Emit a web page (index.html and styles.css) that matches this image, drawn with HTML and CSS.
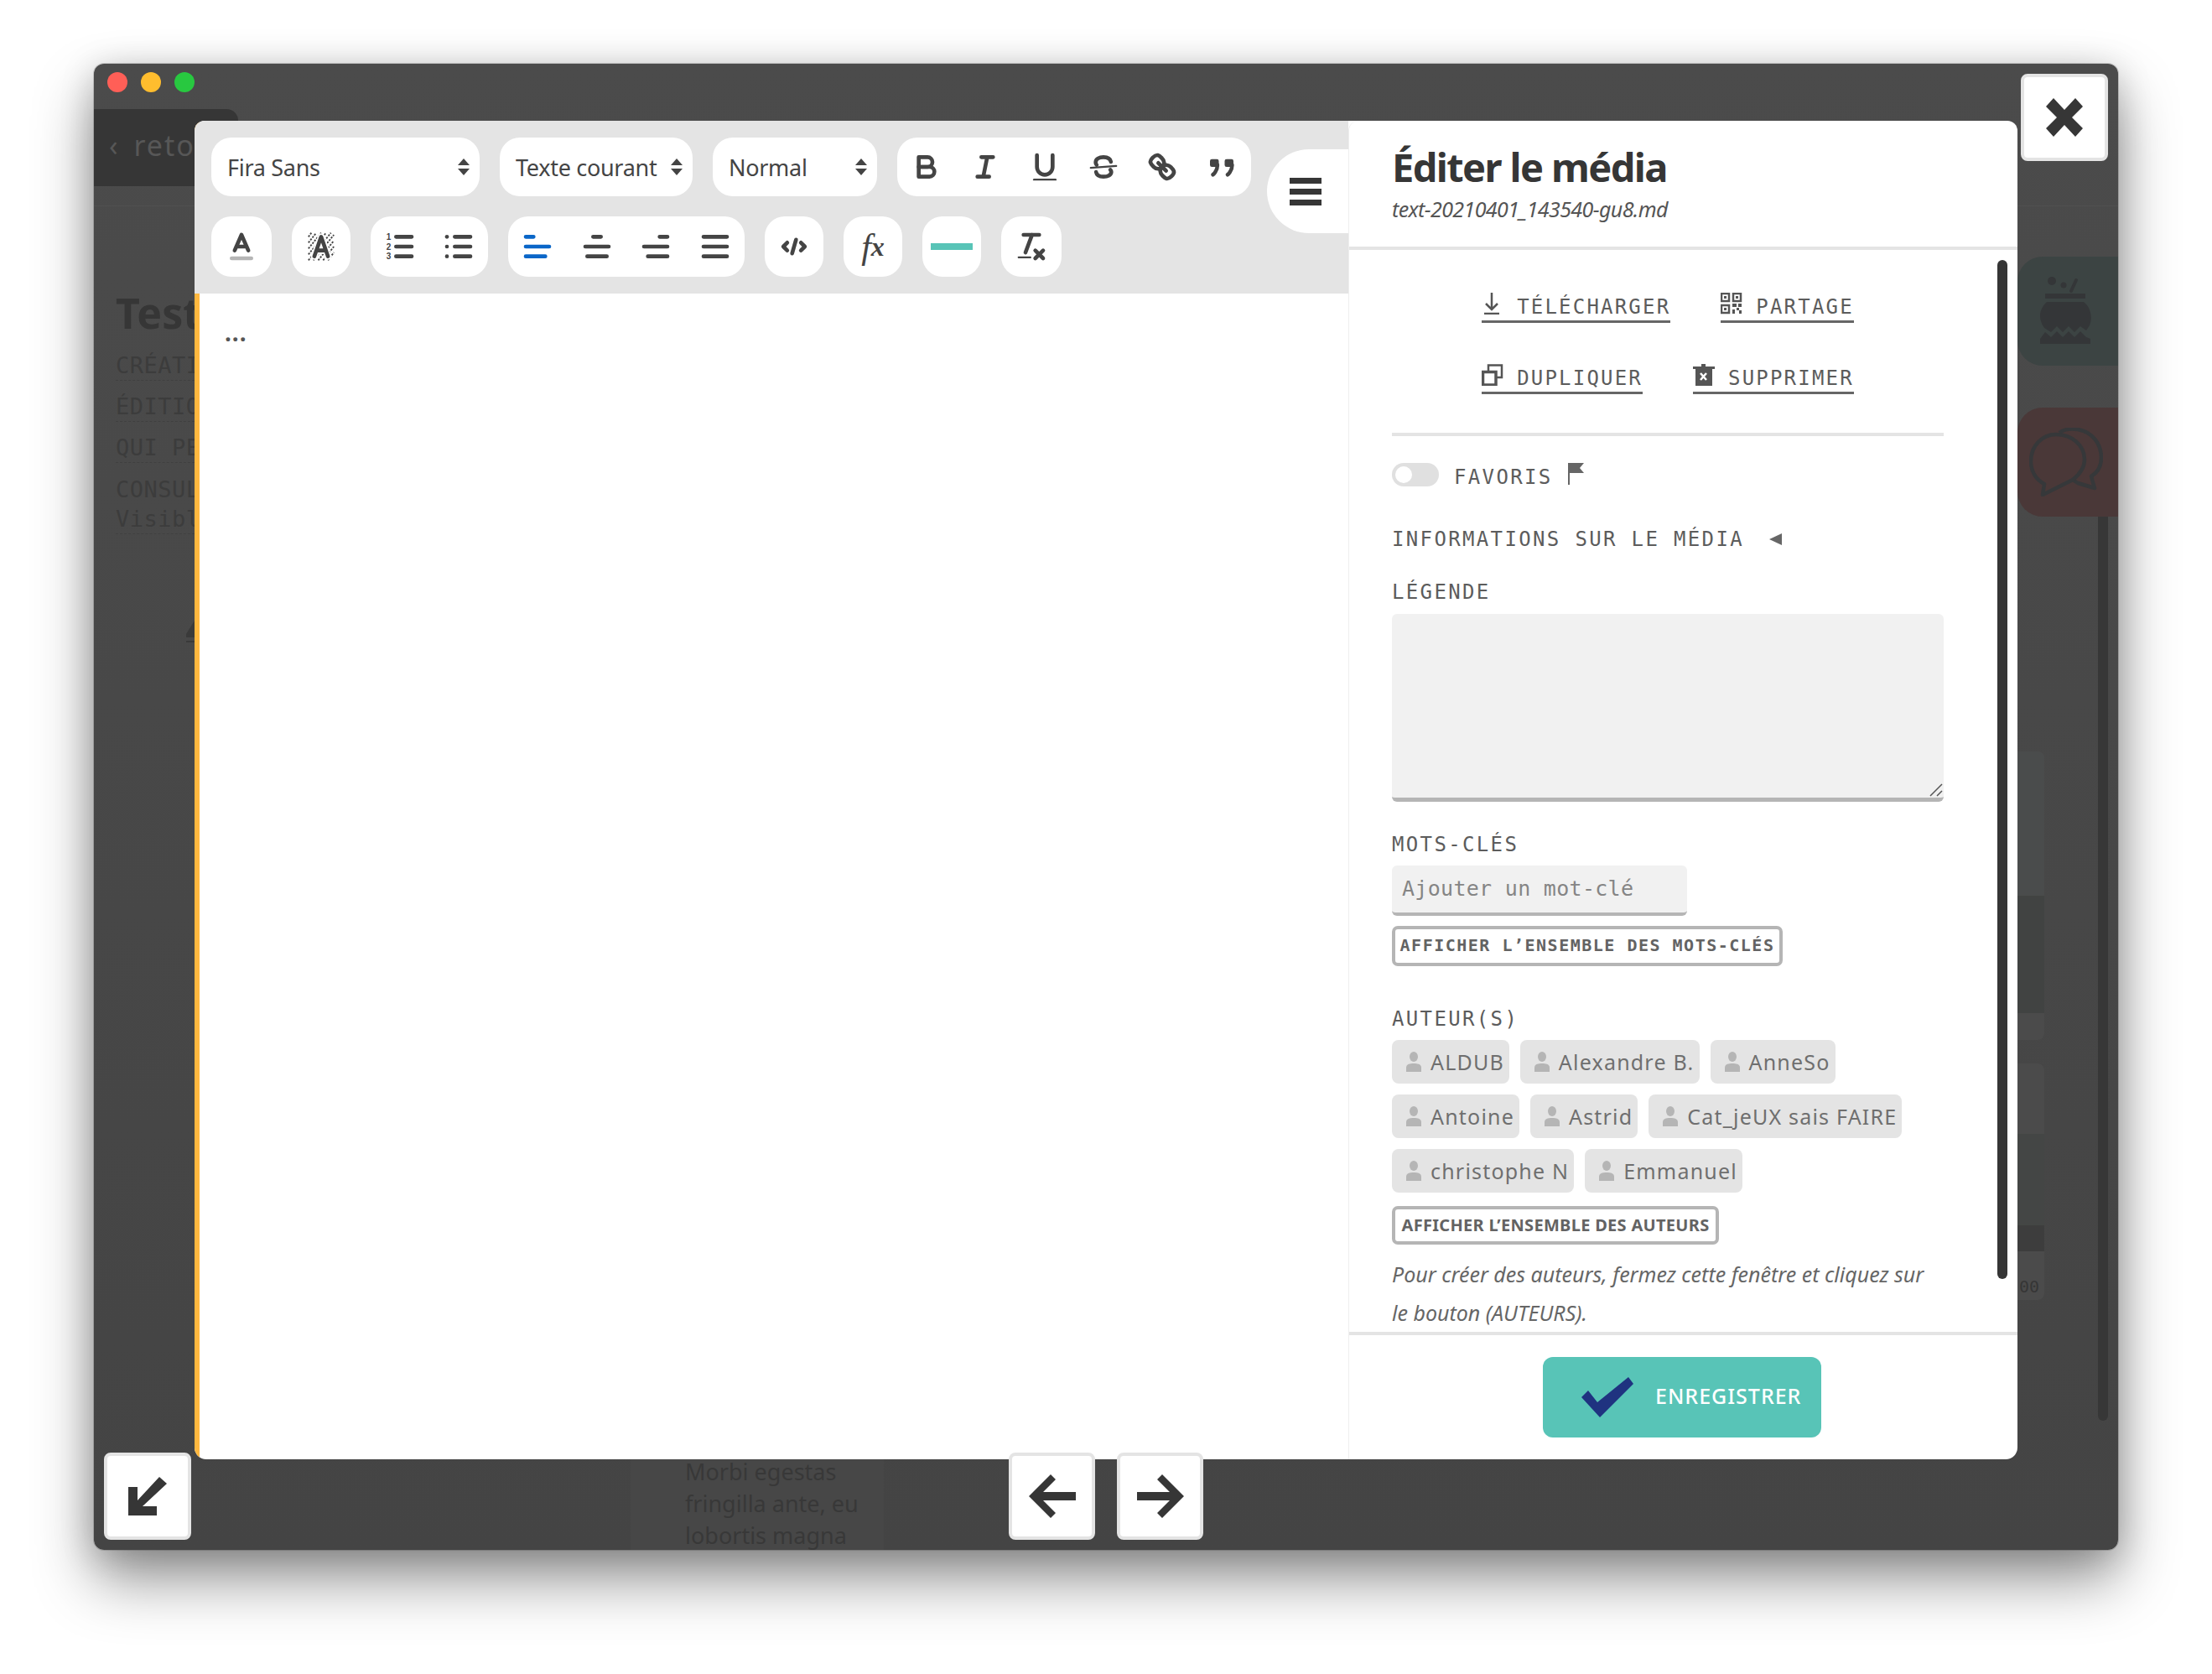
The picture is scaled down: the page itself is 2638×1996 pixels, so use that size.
FILE: index.html
```html
<!DOCTYPE html>
<html lang="fr">
<head>
  <meta charset="UTF-8">
  <title>Éditer le média</title>
  <link rel="stylesheet" href="styles.css">
</head>
<body>
<div class="window">
  <div class="titlebar">
    <span class="dot dot-red"></span>
    <span class="dot dot-yellow"></span>
    <span class="dot dot-green"></span>
  </div>

  <!-- page dimmed behind the modal -->
  <div class="back-tab">‹ retour</div>
  <div class="back-strip"></div>
  <div class="back-col">
    <h1 class="back-title">Test</h1>
    <p class="back-meta">CRÉATION</p>
    <p class="back-meta">ÉDITION</p>
    <p class="back-meta">QUI PEUT</p>
    <p class="back-meta back-meta-last">CONSULTER<br>Visible</p>
  </div>
  <svg class="back-pen" viewBox="0 0 10 26"><path d="M10 0 0 16v4h10z"/><rect y="24" width="10" height="2"/></svg>

  <div class="tile tile-green">
    <svg viewBox="0 0 62 80">
      <circle cx="15" cy="5" r="5"/><circle cx="29" cy="10" r="3.500"/>
      <path d="M44 4 38 17" fill="none" stroke="#343638" stroke-width="4" stroke-linecap="round"/>
      <rect x="7" y="20" width="48" height="6"/>
      <path d="M9 30H53C61 36 64 48 60 58L56 64 49 59 42 66 35 59 28 66 21 59 14 66 6 61C-2 50 0 38 9 30Z"/>
      <path d="M1 80V74L7 66 14 72 21 65 28 72 35 65 42 72 49 65 56 72 61 74V80Z"/>
    </svg>
  </div>
  <div class="tile tile-red">
    <svg viewBox="0 0 88 82" fill="none" stroke="#36383a" stroke-width="4.500" stroke-linejoin="round">
      <path d="M36 6C42 1 50 1 58 2 76 5 86 20 86 36 86 45 82 53 74 58L78 72 58 66 52 62"/>
      <path d="M32 8C15 8 2 22 2 40 2 52 8 62 18 67L16 80 52 62C62 54 66 46 66 38 66 21 51 8 32 8Z"/>
    </svg>
  </div>
  <div class="card card-one"><div class="card-img"></div></div>
  <div class="card card-two"><div class="card-head"></div><div class="card-img"></div><div class="card-foot">00</div></div>
  <div class="bottom-card">Morbi egestas<br>fringilla ante, eu<br>lobortis magna</div>
  <div class="page-scroll"></div>

  <!-- modal -->
  <div class="modal">
    <div class="editor">
      <div class="toolbar">
        <div class="tool-row">
          <div class="select select-font">Fira Sans<span class="updown"></span></div>
          <div class="select select-style">Texte courant<span class="updown"></span></div>
          <div class="select select-size">Normal<span class="updown"></span></div>
          <div class="group group-format">
            <span class="tool"><svg viewBox="0 0 18 18"><path d="M5 4H9.500A2.500 2.500 0 0 1 9.500 9H5Z"/><path d="M5 9H10.500A2.500 2.500 0 0 1 10.500 14H5Z"/></svg></span>
            <span class="tool"><svg viewBox="0 0 18 18"><path d="M7 4H13M5 14H11M8 14 10 4"/></svg></span>
            <span class="tool"><svg viewBox="0 0 18 18"><path d="M5 3V9A4 4 0 0 0 13 9V3"/><rect class="fill" x="3" y="15" width="12" height="1" rx="0.500"/></svg></span>
            <span class="tool"><svg viewBox="0 0 18 18"><path class="thin" d="M15.500 8.500 2.500 9.500"/><path d="M12.800 6.400C12.500 4.800 10.900 4 9 4 6.800 4 5 5 5 6.700 5 7.300 5.200 7.700 5.500 8M12.500 10.500C12.800 10.800 13 11.200 13 11.600 13 13.100 11.200 14 9 14 7 14 5.500 13.200 5.200 11.600"/></svg></span>
            <span class="tool"><svg viewBox="0 0 18 18"><path d="M7 7 11 11"/><path d="M8.900 4.600A3.500 3.500 0 0 1 9.260 9.260 3.500 3.500 0 0 1 4.600 8.900C3.200 7.500 2 6.400 4.200 4.200S7.500 3.200 8.900 4.600Z"/><path d="M13.400 9.100A3.500 3.500 0 0 0 8.740 8.740 3.500 3.500 0 0 0 9.100 13.400C10.500 14.800 11.600 16 13.800 13.800S14.800 10.500 13.400 9.100Z"/></svg></span>
            <span class="tool"><svg viewBox="0 0 18 18"><rect class="fill" x="3" y="5" width="4.500" height="4" rx="1"/><rect class="fill" x="10.500" y="5" width="4.500" height="4" rx="1"/><path d="M6.800 8C6.800 11 4.500 13 4.500 13M14.300 8C14.300 11 12 13 12 13"/></svg></span>
          </div>
        </div>
        <div class="tool-row">
          <div class="group">
            <span class="tool tool-one"><svg viewBox="0 0 18 18"><path d="M5.500 11 9 3 12.500 11M11.600 9H6.400"/><rect class="grey" x="3" y="14" width="12" height="2" rx="1"/></svg></span>
          </div>
          <div class="group">
            <span class="tool tool-bg"><svg viewBox="0 0 18 18"><path class="hatch" d="M2.500 4 4 2M2.500 7 6.500 2M2.500 10 9 2M2.500 13 11.500 2M2.500 16 14 2M5 16 15.500 3M7.500 16 15.500 6M10 16 15.500 9M12.500 16 15.500 12"/><path class="halo" d="M5.500 14 9 4 12.500 14M11.400 11H6.600"/><path d="M5.500 14 9 4 12.500 14M11.400 11H6.600"/></svg></span>
          </div>
          <div class="group">
            <span class="tool"><svg viewBox="0 0 18 18"><path d="M7 4H15M7 9H15M7 14H15"/><text class="num" x="2" y="5.600">1</text><text class="num" x="2" y="10.600">2</text><text class="num" x="2" y="15.600">3</text></svg></span>
            <span class="tool"><svg viewBox="0 0 18 18"><path d="M7 4H15M7 9H15M7 14H15"/><circle class="fill" cx="3" cy="4" r="1"/><circle class="fill" cx="3" cy="9" r="1"/><circle class="fill" cx="3" cy="14" r="1"/></svg></span>
          </div>
          <div class="group group-align">
            <span class="tool tool-active"><svg viewBox="0 0 18 18"><path d="M3 4H7M3 9H15M3 14H13"/></svg></span>
            <span class="tool"><svg viewBox="0 0 18 18"><path d="M7 4H11M3 9H15M4 14H14"/></svg></span>
            <span class="tool"><svg viewBox="0 0 18 18"><path d="M11 4H15M3 9H15M5 14H15"/></svg></span>
            <span class="tool"><svg viewBox="0 0 18 18"><path d="M3 4H15M3 9H15M3 14H15"/></svg></span>
          </div>
          <div class="group">
            <span class="tool"><svg viewBox="0 0 18 18"><path d="M5.500 7 3.500 9 5.500 11M12.500 7 14.500 9 12.500 11M10 5.500 8 12.500"/></svg></span>
          </div>
          <div class="group">
            <span class="tool tool-fx"><i>f</i><sub>x</sub></span>
          </div>
          <div class="group">
            <span class="tool"><span class="hr-mark"></span></span>
          </div>
          <div class="group">
            <span class="tool tool-one"><svg viewBox="0 0 18 18"><path d="M5 3H13M6 12 9.350 3M11 11 15 15M15 11 11 15"/><rect class="fill" x="2" y="14" width="7" height="1" rx="0.500"/></svg></span>
          </div>
        </div>
      </div>
      <div class="editor-text">...</div>
      <div class="menu-tab"><span></span><span></span><span></span></div>
    </div>

    <div class="panel">
      <header class="panel-head">
        <h2>Éditer le média</h2>
        <p>text-20210401_143540-gu8.md</p>
      </header>

      <div class="panel-body">
        <div class="actions">
          <div class="action-row">
            <a class="action"><svg viewBox="0 0 26 26"><path d="M12 0V19M5 13 12 20 19 13M3 25H21"/></svg>TÉLÉCHARGER</a>
            <a class="action"><svg class="qr" viewBox="0 0 26 26"><path d="M1 1H10V10H1ZM15 1H24V10H15ZM1 15H10V24H1Z"/><rect class="solid" x="4" y="4" width="3" height="3"/><rect class="solid" x="18" y="4" width="3" height="3"/><rect class="solid" x="4" y="18" width="3" height="3"/><rect class="solid" x="14" y="13" width="5" height="4"/><rect class="solid" x="21" y="13" width="4" height="4"/><rect class="solid" x="14" y="20" width="3" height="5"/><rect class="solid" x="19" y="18" width="3" height="3"/><rect class="solid" x="22" y="21" width="3" height="4"/></svg>PARTAGE</a>
          </div>
          <div class="action-row">
            <a class="action"><svg viewBox="0 0 26 26"><path d="M8 9V1.500H24V16H17"/><path d="M1.500 9.500H17V25H1.500Z" stroke-width="3.500"/></svg>DUPLIQUER</a>
            <a class="action"><svg viewBox="0 0 26 26"><path class="solid" d="M10 0H15V3H26V6H23V26H3V6H0V3H10Z"/><path class="cross" d="M9 11 16 19M16 11 9 19"/></svg>SUPPRIMER</a>
          </div>
        </div>

        <div class="fav-row">
          <span class="switch"></span>
          <span class="mono-label">FAVORIS</span>
          <svg class="flag" viewBox="0 0 19 26"><rect width="2" height="26"/><path d="M2 0H19L14 6 19 12H2Z"/></svg>
        </div>

        <div class="info-row">
          <span class="mono-label">INFORMATIONS SUR LE MÉDIA</span>
          <span class="arrow-left"></span>
        </div>

        <label class="mono-label field-label" for="legende">LÉGENDE</label>
        <div class="caption-wrap">
          <textarea id="legende" class="caption"></textarea>
          <svg class="grip" viewBox="0 0 16 16"><path d="M15 1 1 15M15 9 9 15"/></svg>
        </div>

        <label class="mono-label keywords-label" for="motcle">MOTS-CLÉS</label>
        <input id="motcle" class="keyword" type="text" placeholder="Ajouter un mot-clé">
        <button class="outline outline-mono">AFFICHER L’ENSEMBLE DES MOTS-CLÉS</button>

        <div class="mono-label authors-label">AUTEUR(S)</div>
        <div class="tags">
          <span class="tag"><svg viewBox="0 0 18 24"><ellipse cx="9" cy="6" rx="5" ry="6"/><path d="M0 24V19C0 15 4 14 9 14S18 15 18 19V24Z"/></svg>ALDUB</span>
          <span class="tag"><svg viewBox="0 0 18 24"><ellipse cx="9" cy="6" rx="5" ry="6"/><path d="M0 24V19C0 15 4 14 9 14S18 15 18 19V24Z"/></svg>Alexandre B.</span>
          <span class="tag"><svg viewBox="0 0 18 24"><ellipse cx="9" cy="6" rx="5" ry="6"/><path d="M0 24V19C0 15 4 14 9 14S18 15 18 19V24Z"/></svg>AnneSo</span>
          <span class="tag"><svg viewBox="0 0 18 24"><ellipse cx="9" cy="6" rx="5" ry="6"/><path d="M0 24V19C0 15 4 14 9 14S18 15 18 19V24Z"/></svg>Antoine</span>
          <span class="tag"><svg viewBox="0 0 18 24"><ellipse cx="9" cy="6" rx="5" ry="6"/><path d="M0 24V19C0 15 4 14 9 14S18 15 18 19V24Z"/></svg>Astrid</span>
          <span class="tag"><svg viewBox="0 0 18 24"><ellipse cx="9" cy="6" rx="5" ry="6"/><path d="M0 24V19C0 15 4 14 9 14S18 15 18 19V24Z"/></svg>Cat_jeUX sais FAIRE</span>
          <span class="tag"><svg viewBox="0 0 18 24"><ellipse cx="9" cy="6" rx="5" ry="6"/><path d="M0 24V19C0 15 4 14 9 14S18 15 18 19V24Z"/></svg>christophe N</span>
          <span class="tag"><svg viewBox="0 0 18 24"><ellipse cx="9" cy="6" rx="5" ry="6"/><path d="M0 24V19C0 15 4 14 9 14S18 15 18 19V24Z"/></svg>Emmanuel</span>
        </div>
        <button class="outline outline-sans">AFFICHER L’ENSEMBLE DES AUTEURS</button>
        <p class="help">Pour créer des auteurs, fermez cette fenêtre et cliquez sur le bouton (AUTEURS).</p>
      </div>
      <div class="panel-scroll"></div>

      <footer class="panel-foot">
        <button class="save">
          <svg viewBox="0 0 62 48"><path d="M0 24 8 16 19 30 56 0 62 8 22 48Z"/></svg>
          ENREGISTRER
        </button>
      </footer>
    </div>
  </div>

  <!-- floating buttons -->
  <button class="float float-close"><svg viewBox="0 0 50 50"><path d="M3 12 12 2 25 16 38 2 47 12 34 25 47 38 38 48 25 34 12 48 3 38 16 25Z"/></svg></button>
  <button class="float float-min"><svg viewBox="0 0 46 46"><path d="M37 0 46 8 17 35H34V46H0V12H11V28Z"/></svg></button>
  <button class="float float-prev"><svg viewBox="0 0 56 52"><path d="M26 0 32 6 17 21H56V31H17L32 46 26 52 0 26Z"/></svg></button>
  <button class="float float-next"><svg viewBox="0 0 56 52"><path d="M30 0 24 6 39 21H0V31H39L24 46 30 52 56 26Z"/></svg></button>
</div>
</body>
</html>
```

FILE: styles.css
```css
* {
  box-sizing: border-box;
}

html, body {
  margin: 0;
  background: #fff;
}

body {
  width: 2638px;
  height: 1996px;
  padding: 76px 112px 0;
  overflow: hidden;
  font-family: "Noto Sans", sans-serif;
}

.window {
  position: relative;
  width: 2414px;
  height: 1772px;
  border-radius: 12px;
  background: linear-gradient(#4b4b4b, #444);
  box-shadow: 0 0 0 1px rgba(0,0,0,.15), 0 36px 70px rgba(0,0,0,.42), 0 6px 40px rgba(0,0,0,.18);
  overflow: hidden;
}

.titlebar {
  display: flex;
  gap: 16px;
  padding: 10px 16px;
}

.dot {
  width: 24px;
  height: 24px;
  border-radius: 50%;
}
.dot-red { background: #ff5f57; }
.dot-yellow { background: #ffbd2e; }
.dot-green { background: #28c840; }

/* dimmed page */
.back-tab {
  width: 172px;
  height: 92px;
  margin-top: 10px;
  padding: 20px 0 0 18px;
  background: #363636;
  border-top-right-radius: 14px;
  color: #575757;
  font-size: 34px;
  letter-spacing: 2px;
  word-spacing: 6px;
  white-space: nowrap;
  overflow: hidden;
}

.back-strip {
  height: 24px;
  border-bottom: 1px solid #505050;
}

.back-col {
  width: 120px;
  padding: 93px 0 0 26px;
  overflow: hidden;
  white-space: nowrap;
  color: #3c3c3c;
  font-family: "DejaVu Sans Mono", monospace;
}

.back-title {
  margin: 0 0 12px;
  font-family: "Noto Sans", sans-serif;
  font-size: 50px;
  line-height: 68px;
  color: #363636;
}

.back-meta {
  margin: 0 0 14px;
  font-size: 27px;
  line-height: 34px;
  letter-spacing: 0.500px;
  border-bottom: 1px dashed #404040;
}
.back-meta-last {
  line-height: 35px;
}

.back-pen {
  position: absolute;
  left: 110px;
  top: 664px;
  width: 10px;
  height: 26px;
  fill: #3a3a3a;
}

.tile {
  position: absolute;
  left: 2294px;
  width: 130px;
  height: 130px;
  border-radius: 30px 0 0 30px;
}
.tile svg {
  position: absolute;
}
.tile-green {
  top: 230px;
  background: #3c4443;
}
.tile-green svg {
  left: 26px;
  top: 24px;
  width: 62px;
  height: 80px;
  fill: #343638;
}
.tile-red {
  top: 410px;
  background: #4a3838;
}
.tile-red svg {
  left: 14px;
  top: 24px;
  width: 88px;
  height: 82px;
}

.card {
  position: absolute;
  left: 2280px;
  width: 46px;
  background: #4b4b4b;
  border-radius: 8px;
  overflow: hidden;
}
.card-one {
  top: 820px;
  height: 344px;
}
.card-one .card-img {
  height: 312px;
  background: linear-gradient(#4a4c4c 55%, #414342 55%);
}
.card-two {
  top: 1192px;
  height: 282px;
}
.card-head {
  height: 84px;
}
.card-two .card-img {
  height: 140px;
  background: linear-gradient(#444645 78%, #3d3d3d 78%);
}
.card-foot {
  margin-top: 30px;
  padding-left: 16px;
  color: #363636;
  font: 20px/24px "DejaVu Sans Mono", monospace;
}

.bottom-card {
  position: absolute;
  left: 640px;
  top: 1660px;
  width: 302px;
  height: 112px;
  padding-left: 65px;
  background: #474747;
  color: #383838;
  font-size: 27px;
  line-height: 38px;
  white-space: nowrap;
}

.page-scroll {
  position: absolute;
  left: 2390px;
  top: 540px;
  width: 12px;
  height: 1078px;
  background: #373737;
  border-radius: 0 0 6px 6px;
}

/* modal */
.modal {
  position: absolute;
  left: 120px;
  top: 68px;
  display: flex;
  width: 2174px;
  height: 1596px;
  border-radius: 12px 12px 14px 14px;
  background: #fff;
  overflow: hidden;
}

.editor {
  position: relative;
  width: 1376px;
  border-left: 6px solid #ffb83f;
}

.toolbar {
  display: flex;
  flex-direction: column;
  gap: 24px;
  height: 206px;
  margin-left: -6px;
  padding: 20px;
  background: #e4e4e4;
}

.tool-row {
  display: flex;
  gap: 24px;
}

.select {
  display: flex;
  align-items: center;
  justify-content: space-between;
  height: 70px;
  padding: 0 12px 0 19px;
  border-radius: 24px;
  background: #fff;
  color: #444;
  font-size: 27px;
  letter-spacing: -0.300px;
  white-space: nowrap;
}
.select-font { width: 320px; }
.select-style { width: 230px; }
.select-size { width: 196px; }

.updown {
  position: relative;
  width: 14px;
  height: 20px;
}
.updown::before,
.updown::after {
  content: "";
  position: absolute;
  left: 0;
  border-left: 7px solid transparent;
  border-right: 7px solid transparent;
}
.updown::before {
  top: 0;
  border-bottom: 8px solid #444;
}
.updown::after {
  bottom: 0;
  border-top: 8px solid #444;
}

.group {
  display: flex;
  border-radius: 24px;
  background: #fff;
}

.tool-row:first-child .group {
  height: 70px;
}
.tool-row:last-child .group {
  height: 72px;
}

.tool {
  display: flex;
  align-items: center;
  justify-content: center;
  width: 70px;
}
.tool-one {
  width: 72px;
}
.group-format {
  width: 422px;
}
.group-align {
  width: 282px;
}
.group-format .tool,
.group-align .tool {
  flex: 1;
}

.tool svg {
  width: 42px;
  height: 42px;
  fill: none;
  stroke: #444;
  stroke-width: 2;
  stroke-linecap: round;
  stroke-linejoin: round;
}
.tool svg .fill {
  fill: #444;
  stroke: none;
}
.tool svg .grey {
  fill: #b5b5b5;
  stroke: none;
}
.tool svg .thin {
  stroke-width: 1;
}
.tool svg .hatch {
  stroke-width: 0.800;
  stroke-dasharray: 1 0.600;
  stroke-linecap: butt;
}
.tool svg .halo {
  stroke: #fff;
  stroke-width: 3.500;
}
.tool svg .num {
  fill: #444;
  stroke: none;
  font: bold 4.300px "Liberation Sans", sans-serif;
}
.tool-active svg {
  stroke: #0a66c8;
}

.tool-fx {
  color: #444;
  font: italic bold 42px "Liberation Serif", serif;
}
.tool-fx i {
  font-weight: 400;
}
.tool-fx sub {
  font-size: 32px;
  line-height: 0;
}

.hr-mark {
  width: 50px;
  height: 8px;
  background: #58c4b7;
}

.editor-text {
  padding: 26px 30px;
  color: #555;
  font-size: 28px;
  font-weight: 700;
  letter-spacing: 1px;
  line-height: 40px;
}

.menu-tab {
  position: absolute;
  right: 0;
  top: 34px;
  display: flex;
  flex-direction: column;
  justify-content: center;
  gap: 6px;
  width: 97px;
  height: 100px;
  padding-left: 27px;
  border-radius: 50px 0 0 50px;
  background: #fff;
}
.menu-tab span {
  width: 38px;
  height: 7px;
  background: #363636;
}

/* media panel */
.panel {
  position: relative;
  display: flex;
  flex-direction: column;
  flex: 1;
  min-width: 0;
  border-left: 1px solid #eee;
  border-radius: 12px 0 0 0;
}

.panel-head {
  height: 154px;
  padding: 24px 0 0 51px;
  border-bottom: 4px solid #e4e4e4;
}
.panel-head h2 {
  margin: 0;
  color: #363636;
  font-size: 47px;
  font-weight: 700;
  letter-spacing: -1.600px;
  line-height: 62px;
}
.panel-head p {
  margin: 0;
  color: #555;
  font-size: 25px;
  font-style: italic;
  line-height: 38px;
  letter-spacing: -0.600px;
}

.panel-body {
  flex: 1;
  min-height: 0;
  padding: 0 88px 0 51px;
  overflow: hidden;
}

.panel-scroll {
  position: absolute;
  left: 773px;
  top: 166px;
  width: 12px;
  height: 1215px;
  border-radius: 6px;
  background: #353535;
}

.actions {
  display: flex;
  flex-direction: column;
  gap: 48px;
  padding: 50px 0 46px;
  border-bottom: 4px solid #e4e4e4;
}

.action-row {
  display: flex;
  justify-content: center;
  gap: 60px;
}

.action {
  display: flex;
  align-items: flex-end;
  gap: 16px;
  height: 37px;
  border-bottom: 3px solid #666;
  color: #5c5c5c;
  font: 24px/32px "DejaVu Sans Mono", monospace;
  letter-spacing: 2.200px;
}
.action svg {
  flex: none;
  width: 26px;
  height: 26px;
  margin-bottom: 7px;
  fill: none;
  stroke: #555;
  stroke-width: 2.500;
}
.action svg .solid {
  fill: #555;
  stroke: none;
}
.action svg .cross {
  stroke: #fff;
  stroke-width: 2.500;
}

.mono-label {
  color: #5c5c5c;
  font: 24px/30px "DejaVu Sans Mono", monospace;
  letter-spacing: 2.350px;
}

.fav-row {
  display: flex;
  align-items: flex-start;
  margin-top: 32px;
  height: 30px;
}
.fav-row .mono-label {
  margin: 2px 0 0 18px;
}
.switch {
  position: relative;
  width: 56px;
  height: 28px;
  border-radius: 14px;
  background: #e0e0e0;
}
.switch::after {
  content: "";
  position: absolute;
  left: 4px;
  top: 4px;
  width: 20px;
  height: 20px;
  border-radius: 50%;
  background: #fff;
}
.flag {
  width: 19px;
  height: 26px;
  margin-left: 18px;
  fill: #666;
}

.info-row {
  display: flex;
  align-items: center;
  gap: 30px;
  margin-top: 46px;
}
.arrow-left {
  border-top: 7px solid transparent;
  border-bottom: 7px solid transparent;
  border-right: 15px solid #666;
}

.field-label,
.keywords-label,
.authors-label {
  display: block;
}
.field-label { margin-top: 33px; }
.keywords-label { margin-top: 36px; }
.authors-label { margin-top: 48px; }

.caption-wrap {
  position: relative;
  margin-top: 11px;
}

.caption {
  display: block;
  width: 100%;
  height: 224px;
  border: 0;
  border-bottom: 5px solid #b5b5b5;
  border-radius: 6px;
  background: #f1f1f1;
  resize: none;
  outline: none;
}

.grip {
  position: absolute;
  right: 1px;
  bottom: 6px;
  width: 16px;
  height: 16px;
  fill: none;
  stroke: #555;
  stroke-width: 1.500;
}

.keyword {
  display: block;
  width: 352px;
  height: 60px;
  margin-top: 10px;
  padding: 0 12px 2px;
  border: 0;
  border-bottom: 4px solid #b5b5b5;
  border-radius: 6px;
  background: #f1f1f1;
  font: 25px "DejaVu Sans Mono", monospace;
  letter-spacing: 0.300px;
}
.keyword::placeholder {
  color: #858585;
  opacity: 1;
}

.outline {
  display: block;
  padding: 0 0 2px;
  border: 4px solid #b5b5b5;
  border-radius: 7px;
  background: #fff;
  color: #636363;
  font-weight: 700;
  white-space: nowrap;
}
.outline-mono {
  width: 466px;
  height: 48px;
  margin-top: 12px;
  font-family: "DejaVu Sans Mono", monospace;
  font-size: 20px;
  letter-spacing: 1.500px;
}
.outline-sans {
  width: 390px;
  height: 46px;
  margin-top: 16px;
  font-family: "Noto Sans", sans-serif;
  font-size: 20px;
  letter-spacing: 0.300px;
}

.tags {
  display: flex;
  flex-wrap: wrap;
  gap: 13px;
  margin-top: 10px;
}

.tag {
  display: flex;
  align-items: center;
  gap: 11px;
  height: 52px;
  padding: 0 6px 0 17px;
  border-radius: 8px;
  background: #e4e4e4;
  color: #6f6f6f;
  font-size: 25px;
  letter-spacing: 1.200px;
}
.tag svg {
  width: 18px;
  height: 24px;
  fill: #b5b5b5;
}

.help {
  margin: 12px 0 0;
  color: #666;
  font-size: 25px;
  font-style: italic;
  line-height: 46px;
}

.panel-foot {
  display: flex;
  align-items: center;
  justify-content: center;
  height: 152px;
  border-top: 4px solid #e4e4e4;
}

.save {
  display: flex;
  align-items: center;
  gap: 26px;
  width: 332px;
  height: 96px;
  margin-left: -3px;
  padding: 0 0 4px 46px;
  border: 0;
  border-radius: 12px;
  background: #58c4b7;
  color: #fff;
  font: 500 25px "Noto Sans", sans-serif;
  letter-spacing: 1px;
}
.save svg {
  width: 62px;
  height: 48px;
  margin-top: 4px;
  fill: #1f3380;
}

/* floating square buttons */
.float {
  position: absolute;
  display: flex;
  align-items: center;
  justify-content: center;
  width: 104px;
  height: 104px;
  padding: 0;
  border: 4px solid #e4e4e4;
  border-radius: 8px;
  background: #fff;
}
.float svg {
  fill: #363636;
}
.float-close {
  left: 2298px;
  top: 12px;
}
.float-close svg {
  width: 50px;
  height: 50px;
}
.float-min {
  left: 12px;
  top: 1656px;
}
.float-min svg {
  width: 46px;
  height: 46px;
}
.float-prev {
  left: 1091px;
  top: 1656px;
  width: 103px;
}
.float-next {
  left: 1220px;
  top: 1656px;
  width: 103px;
}
.float-prev svg,
.float-next svg {
  width: 56px;
  height: 52px;
}
```
